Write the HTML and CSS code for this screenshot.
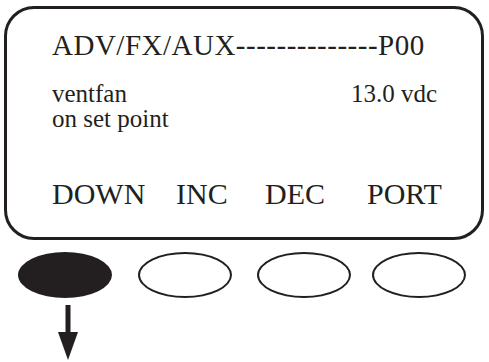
FILE: index.html
```html
<!DOCTYPE html>
<html>
<head>
    <link rel="stylesheet" href="styles.css">
</head>
<body>
  <div class="panel">
    <div class="title">ADV/FX/AUX--------------P00</div>

    <div class="info">
      <div class="info-row">
        <span>ventfan</span>
        <span>13.0 vdc</span>
      </div>
      <div class="info-row">
        <span>on set point</span>
      </div>
    </div>

    <div class="labels">
      <span>DOWN</span>
      <span>INC</span>
      <span>DEC</span>
      <span>PORT</span>
    </div>
  </div>

  <!-- soft keys under the display -->
  <div class="keys">
    <div class="key pressed"></div>
    <div class="key"></div>
    <div class="key"></div>
    <div class="key"></div>
  </div>

  <svg class="arrow" width="24" height="56" viewBox="0 0 24 56" xmlns="http://www.w3.org/2000/svg">
    <rect x="9.5" y="0" width="5" height="30" fill="#231f20"/>
    <polygon points="2,27 22,27 12,55" fill="#231f20"/>
  </svg>
</body>
</html>
```

FILE: styles.css
```css
body {
    margin: 0;
    font-family: "Liberation Serif", serif;
    color: #231f20;
    background: #fff;
}

.panel {
    box-sizing: border-box;
    width: 480px;
    height: 234px;
    margin: 6px 0 0 4px;
    padding: 19px 44px 0 45px;
    border: 3px solid #231f20;
    border-radius: 30px;
}

.title {
    font-size: 29px;
    line-height: 34px;
    letter-spacing: 0.5px;
}

.info {
    margin-top: 19px;
    font-size: 25px;
    line-height: 25px;
}

.info-row {
    display: flex;
    justify-content: space-between;
}

.labels {
    display: grid;
    grid-template-columns: 124px 89px 102px auto;
    margin-top: 46px;
    font-size: 30px;
    line-height: 34px;
}

.keys {
    display: grid;
    grid-template-columns: 120px 119px 115px 94px;
    margin: 12px 0 0 18px;
}

.key {
    box-sizing: border-box;
    width: 94px;
    height: 46px;
    border: 2px solid #231f20;
    border-radius: 50%;
}

.key.pressed {
    background: #231f20;
}

.arrow {
    display: block;
    margin: 7px 0 0 56px;
}
```
